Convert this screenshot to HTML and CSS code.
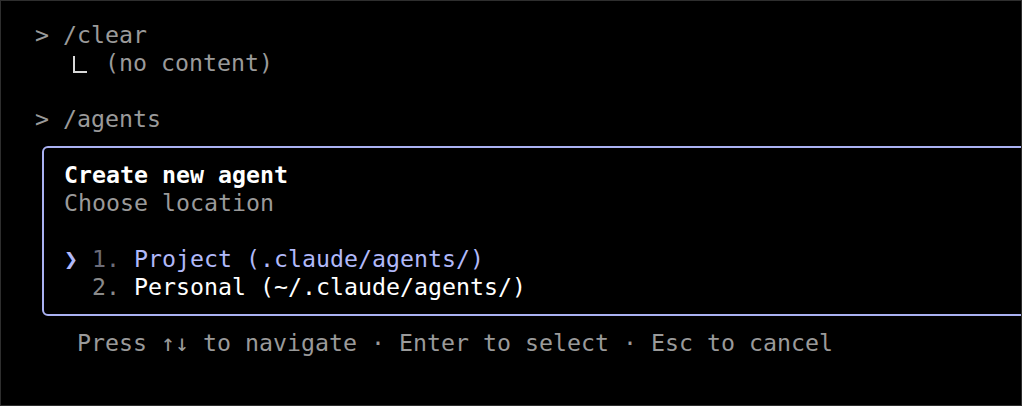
FILE: index.html
```html
<!DOCTYPE html>
<html lang="en">
<head>
<meta charset="utf-8">
<title>Claude Code — agents</title>
<link rel="stylesheet" href="styles.css">
</head>
<body>
<div class="term">
  <div class="line muted"><span>&gt; /clear</span></div>
  <div class="line muted"><span class="indent2"></span><span class="elbow"></span><span class="gap2"></span>(no content)</div>
  <div class="line"></div>
  <div class="line muted">&gt; /agents</div>
  <div class="box">
    <div class="line title">Create new agent</div>
    <div class="line muted">Choose location</div>
    <div class="line"></div>
    <div class="line accent"><span class="pointer">❯</span> <span class="num-dim">1.</span> Project (.claude/agents/)</div>
    <div class="line plain">  <span class="num">2.</span> Personal (~/.claude/agents/)</div>
  </div>
  <div class="line muted hint">Press ↑↓ to navigate · Enter to select · Esc to cancel</div>
</div>
</body>
</html>
```

FILE: styles.css
```css
html, body {
  margin: 0;
  padding: 0;
  background: #000;
  overflow: hidden;
}

.term {
  box-sizing: border-box;
  width: 1022px;
  height: 406px;
  border: 1px solid #2e2e2e;
  padding: 20px 0 0 34px;
  font-family: "DejaVu Sans Mono", "Liberation Mono", monospace;
  font-size: 23.25px;
  color: #e8e8e8;
  overflow: hidden;
}

.line {
  height: 28px;
  line-height: 28px;
  white-space: pre;
}

.muted { color: #9a9a9a; }

.indent2 { display: inline-block; width: 28px; }
.gap2 { display: inline-block; width: 28px; }

.elbow {
  display: inline-block;
  box-sizing: border-box;
  width: 14px;
  height: 17px;
  margin-left: 10px;
  margin-right: -10px;
  border-left: 2px solid #d8d8d8;
  border-bottom: 2px solid #d8d8d8;
  vertical-align: -2px;
}

.box {
  margin: 13px -40px 13px 7px;
  border: 2px solid #aab1f2;
  border-radius: 6px;
  padding: 13px 0 13px 20px;
}

.title {
  color: #ffffff;
  font-weight: bold;
}

.accent { color: #b1b9f9; }
.pointer { color: #b1b9f9; }
.num-dim { color: #6c6c78; }
.num { color: #8a8a8a; }
.plain { color: #ffffff; }

.hint { padding-left: 42px; }
```
